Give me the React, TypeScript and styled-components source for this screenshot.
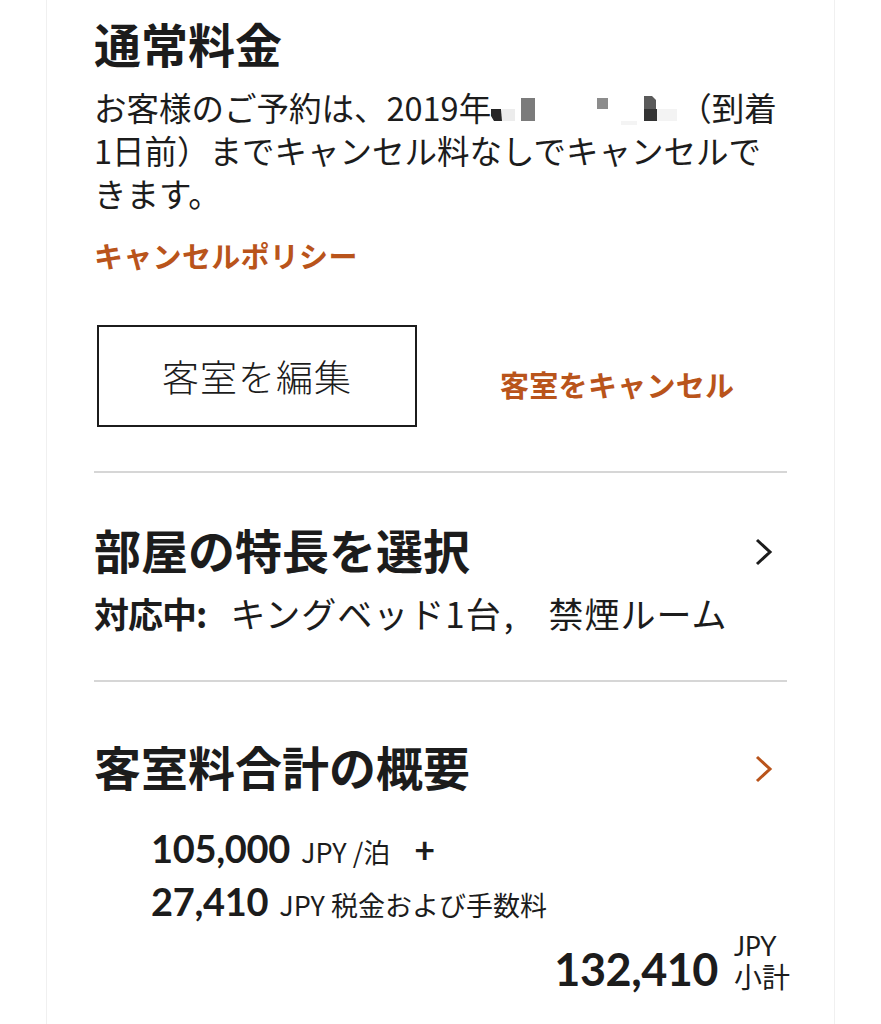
import React from 'react';
import styled, { createGlobalStyle } from 'styled-components';

const GlobalStyle = createGlobalStyle`
  html, body {
    margin: 0;
    padding: 0;
    background: #fff;
  }
  body {
    font-family: "Noto Sans CJK JP", sans-serif;
    color: #1c1c1c;
  }
`;

const ACCENT = '#b9541b';

const Card = styled.div`
  box-sizing: border-box;
  margin-left: 46px;
  width: 789px;
  min-height: 1024px;
  padding: 15px 47px 0 47px;
  border-left: 1px solid #f0f0f0;
  border-right: 1px solid #f0f0f0;
  background: #fff;
`;

const Title = styled.h2`
  margin: 0;
  font-size: 47px;
  line-height: 56px;
  font-weight: 700;
`;

const Body = styled.p`
  margin: 14px 0 0;
  font-size: 32.5px;
  line-height: 43px;
  font-weight: 400;
  white-space: nowrap;
`;

const Link = styled.a<{ size?: number }>`
  display: inline-block;
  color: ${ACCENT};
  font-size: ${(p) => p.size || 29}px;
  line-height: 36px;
  font-weight: 700;
  text-decoration: none;
  letter-spacing: 0.3px;
`;

const PolicyRow = styled.div`
  margin-top: 23px;
`;

const Actions = styled.div`
  display: flex;
  align-items: center;
  gap: 83px;
  margin-top: 52px;
`;

const EditButton = styled.button`
  box-sizing: border-box;
  width: 320px;
  height: 102px;
  margin-left: 3px;
  border: 2px solid #1c1c1c;
  background: #fff;
  color: #1c1c1c;
  font-family: "Noto Sans CJK JP", sans-serif;
  font-size: 37px;
  font-weight: 300;
  letter-spacing: 1px;
`;

const CancelLink = styled(Link)`
  margin-top: 16px;
`;

const Divider = styled.hr<{ gap: number }>`
  margin: ${(p) => p.gap}px 0 0;
  border: 0;
  height: 2px;
  background: #d6d6d6;
`;

const SectionHead = styled.div<{ gap: number }>`
  display: flex;
  align-items: center;
  justify-content: space-between;
  margin-top: ${(p) => p.gap}px;
`;

const Chevron = styled.svg`
  width: 22px;
  height: 30px;
  margin-right: 12px;
  margin-top: 6px;
`;

const SubLine = styled.p`
  margin: 14px 0 0;
  font-size: 35px;
  line-height: 43px;
  letter-spacing: 1px;
  white-space: nowrap;
  strong {
    font-weight: 700;
    margin-right: 24px;
    letter-spacing: -1px;
  }
`;

const Comma = styled.span`
  display: inline-block;
  margin-left: 2px;
  margin-right: 34px;
`;

const Prices = styled.div`
  margin-top: 32px;
  padding-left: 57px;
  font-family: Lato, "Noto Sans CJK JP", sans-serif;
`;

const PriceRow = styled.div<{ gap?: number }>`
  display: flex;
  align-items: baseline;
  height: 44px;
  line-height: 44px;
  margin-top: ${(p) => p.gap || 0}px;
  white-space: nowrap;
`;

const Amount = styled.span`
  font-size: 38px;
  font-weight: 700;
  letter-spacing: -0.3px;
`;

const Unit = styled.span`
  margin-left: 11px;
  font-family: "Noto Sans CJK JP", sans-serif;
  font-size: 27px;
  font-weight: 400;
`;

const Plus = styled.span`
  margin-left: 24px;
  font-size: 36px;
  font-weight: 700;
`;

const Total = styled.div`
  display: flex;
  justify-content: flex-end;
  align-items: flex-end;
  gap: 16px;
  margin-top: 10px;
  font-family: Lato, "Noto Sans CJK JP", sans-serif;
`;

const TotalAmount = styled.span`
  font-size: 45px;
  line-height: 46px;
  font-weight: 700;
  letter-spacing: -0.5px;
`;

const TotalLabel = styled.div`
  display: flex;
  flex-direction: column;
  align-items: flex-start;
  margin-right: -3px;
`;

const LabelLine = styled.span<{ latin?: boolean }>`
  font-family: ${(p) => (p.latin ? 'Lato, sans-serif' : '"Noto Sans CJK JP", sans-serif')};
  font-size: ${(p) => (p.latin ? 26 : 28)}px;
  line-height: ${(p) => (p.latin ? 27 : 32)}px;
`;

// モザイク処理された日付部分
const Redacted = () => (
  <svg width="188" height="30" viewBox="0 0 188 30" style={{ verticalAlign: '-4px' }}>
    <polygon points="0,14 10,14 11,26 3,26 0,21" fill="#262626" />
    <rect x="11" y="14" width="13" height="12" fill="#ececec" />
    <rect x="30" y="3" width="14" height="23" fill="#7b7b7b" />
    <rect x="106" y="3" width="11" height="11" fill="#8c8c8c" />
    <polygon points="153,1 161,1 165,5 165,14 153,14" fill="#5a5a5a" />
    <rect x="153" y="14" width="13" height="12" fill="#333" />
    <rect x="166" y="14" width="20" height="12" fill="#f3f3f3" />
    <rect x="130" y="26" width="16" height="4" fill="#f4f4f4" />
  </svg>
);

const ChevronIcon = ({ color }: { color: string }) => (
  <Chevron viewBox="0 0 22 30">
    <polyline points="4,3 17,15 4,27" fill="none" stroke={color} strokeWidth="3" />
  </Chevron>
);

export default function App() {
  return (
    <>
      <GlobalStyle />
      <Card>
        <Title>通常料金</Title>
        <Body>
          お客様のご予約は、2019年
          <Redacted />
          （到着
          <br />
          1日前）までキャンセル料なしでキャンセルで
          <br />
          きます。
        </Body>
        <PolicyRow>
          <Link href="#">キャンセルポリシー</Link>
        </PolicyRow>
        <Actions>
          <EditButton>客室を編集</EditButton>
          <CancelLink href="#" size={29}>
            客室をキャンセル
          </CancelLink>
        </Actions>

        <Divider gap={44} />
        <SectionHead gap={48}>
          <Title>部屋の特長を選択</Title>
          <ChevronIcon color="#1c1c1c" />
        </SectionHead>
        <SubLine>
          <strong>対応中:</strong>キングベッド1台<Comma>,</Comma>禁煙ルーム
        </SubLine>

        <Divider gap={46} />
        <SectionHead gap={56}>
          <Title>客室料合計の概要</Title>
          <ChevronIcon color={ACCENT} />
        </SectionHead>
        <Prices>
          <PriceRow>
            <Amount>105,000</Amount>
            <Unit>JPY /泊</Unit>
            <Plus>+</Plus>
          </PriceRow>
          <PriceRow gap={9}>
            <Amount>27,410</Amount>
            <Unit>JPY 税金および手数料</Unit>
          </PriceRow>
        </Prices>
        <Total>
          <TotalAmount>132,410</TotalAmount>
          <TotalLabel>
            <LabelLine latin>JPY</LabelLine>
            <LabelLine>小計</LabelLine>
          </TotalLabel>
        </Total>
      </Card>
    </>
  );
}
